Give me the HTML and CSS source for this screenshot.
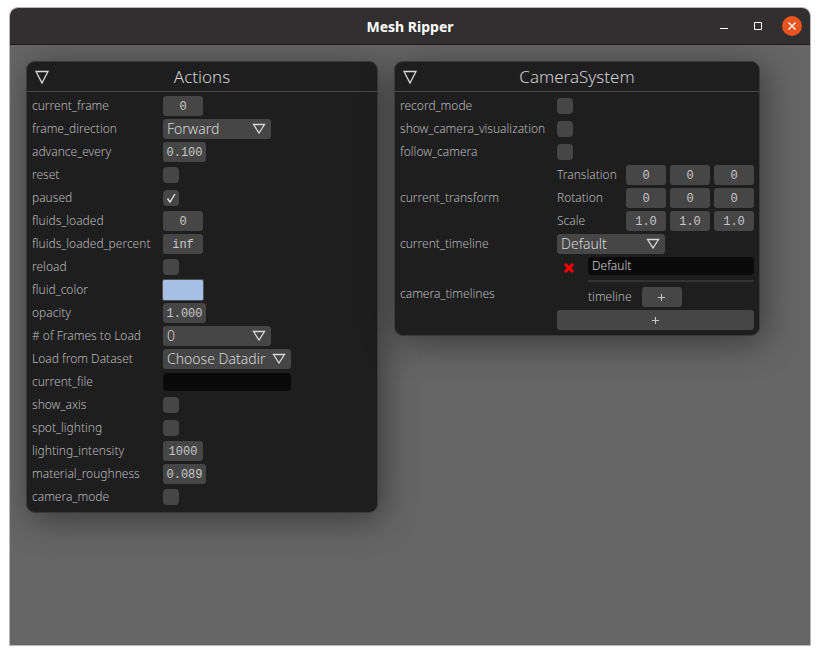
FILE: index.html
```html
<!DOCTYPE html>
<html lang="en">
<head>
<meta charset="utf-8">
<title>Mesh Ripper</title>
<link rel="stylesheet" href="styles.css">
</head>
<body>
<svg class="symbols">
  <symbol id="triangle" viewBox="0 0 14 12"><path d="M1.5 1.5h11L7 10z"/></symbol>
  <symbol id="check" viewBox="0 0 16 16"><path d="M4.5 8.5L7 12l5-8"/></symbol>
</svg>
<div class="window">
  <header class="titlebar">
    <h1 class="title">Mesh Ripper</h1>
    <div class="controls">
      <button class="control" aria-label="Minimize"><svg viewBox="0 0 18 18"><path d="M5 11.5h8"/></svg></button>
      <button class="control" aria-label="Maximize"><svg viewBox="0 0 18 18"><path d="M5.5 5.5h7v7h-7z"/></svg></button>
      <button class="control close" aria-label="Close"><svg viewBox="0 0 18 18"><path d="M5.5 5.5l7 7m0-7l-7 7"/></svg></button>
    </div>
  </header>
  <main class="canvas">
    <section class="panel actions">
      <header class="panel-head">
        <button class="collapse" aria-label="Collapse Actions"><svg viewBox="0 0 16 16"><path d="M2 2.5h12L8 14z"/></svg></button>
        <h2>Actions</h2>
      </header>
      <div class="fields">
        <label for="frame">current_frame</label><input class="num" id="frame" value="0">
        <label for="direction">frame_direction</label>
        <span class="combo"><select id="direction"><option>Forward</option></select><svg><use href="#triangle"/></svg></span>
        <label for="advance">advance_every</label><input class="num wide" id="advance" value="0.100">
        <label for="reset">reset</label><span class="tick"><input type="checkbox" id="reset"><svg><use href="#check"/></svg></span>
        <label for="paused">paused</label><span class="tick"><input type="checkbox" id="paused" checked><svg><use href="#check"/></svg></span>
        <label for="loaded">fluids_loaded</label><input class="num" id="loaded" value="0">
        <label for="percent">fluids_loaded_percent</label><input class="num" id="percent" value="inf">
        <label for="reload">reload</label><span class="tick"><input type="checkbox" id="reload"><svg><use href="#check"/></svg></span>
        <label for="color">fluid_color</label><input type="color" class="swatch" id="color" value="#a6c0e5">
        <label for="opacity">opacity</label><input class="num wide" id="opacity" value="1.000">
        <label for="frames"># of Frames to Load</label>
        <span class="combo"><select id="frames"><option>0</option></select><svg><use href="#triangle"/></svg></span>
        <label for="dataset">Load from Dataset</label>
        <span class="combo large"><select id="dataset"><option>Choose Datadir</option></select><svg><use href="#triangle"/></svg></span>
        <label for="file">current_file</label><input class="text file" id="file">
        <label for="axis">show_axis</label><span class="tick"><input type="checkbox" id="axis"><svg><use href="#check"/></svg></span>
        <label for="spot">spot_lighting</label><span class="tick"><input type="checkbox" id="spot"><svg><use href="#check"/></svg></span>
        <label for="intensity">lighting_intensity</label><input class="num" id="intensity" value="1000">
        <label for="rough">material_roughness</label><input class="num wide" id="rough" value="0.089">
        <label for="mode">camera_mode</label><span class="tick"><input type="checkbox" id="mode"><svg><use href="#check"/></svg></span>
      </div>
    </section>
    <section class="panel camera">
      <header class="panel-head">
        <button class="collapse" aria-label="Collapse CameraSystem"><svg viewBox="0 0 16 16"><path d="M2 2.5h12L8 14z"/></svg></button>
        <h2>CameraSystem</h2>
      </header>
      <div class="fields">
        <label for="record">record_mode</label><span class="tick"><input type="checkbox" id="record"><svg><use href="#check"/></svg></span>
        <label for="visual">show_camera_visualization</label><span class="tick"><input type="checkbox" id="visual"><svg><use href="#check"/></svg></span>
        <label for="follow">follow_camera</label><span class="tick"><input type="checkbox" id="follow"><svg><use href="#check"/></svg></span>
        <span>current_transform</span>
        <div class="transform">
          <label for="tx">Translation</label>
          <div class="vector"><input class="num" id="tx" value="0"><input class="num" aria-label="Translation y" value="0"><input class="num" aria-label="Translation z" value="0"></div>
          <label for="rx">Rotation</label>
          <div class="vector"><input class="num" id="rx" value="0"><input class="num" aria-label="Rotation y" value="0"><input class="num" aria-label="Rotation z" value="0"></div>
          <label for="sx">Scale</label>
          <div class="vector"><input class="num" id="sx" value="1.0"><input class="num" aria-label="Scale y" value="1.0"><input class="num" aria-label="Scale z" value="1.0"></div>
        </div>
        <label for="timeline">current_timeline</label>
        <span class="combo"><select id="timeline"><option>Default</option></select><svg><use href="#triangle"/></svg></span>
        <span>camera_timelines</span>
        <div class="timelines">
          <div class="entry">
            <button class="remove" aria-label="Remove timeline"><svg viewBox="0 0 12 12"><path d="M2 2l8 8m0-8l-8 8"/></svg></button>
            <div class="entry-body">
              <input class="text" aria-label="Timeline name" value="Default">
              <hr>
              <div class="add-row"><span>timeline</span><button class="add" aria-label="Add keyframe"><svg viewBox="0 0 9 9"><path d="M1 4.5h7M4.5 1v7"/></svg></button></div>
            </div>
          </div>
          <button class="add full" aria-label="Add timeline"><svg viewBox="0 0 9 9"><path d="M1 4.5h7M4.5 1v7"/></svg></button>
        </div>
      </div>
    </section>
  </main>
</div>
</body>
</html>
```
FILE: styles.css
```css
* { box-sizing: border-box; }

body {
  margin: 0;
  padding: 7px 9px 9px;
  min-height: 100vh;
  display: flex;
  background: #fff;
  font-family: "Noto Sans", sans-serif;
  font-size: 12px;
  font-weight: 300;
  line-height: 20px;
  color: #b8b8b8;
}

button, input, select {
  margin: 0;
  padding: 0;
  border: 0;
  border-radius: 3px;
  background: #464646;
  color: #d8d8d8;
  font: inherit;
  appearance: none;
}

h1, h2 { margin: 0; }

svg {
  fill: none;
  stroke: currentColor;
}

.symbols { display: none; }

.window {
  flex: 1;
  min-width: 0;
  display: flex;
  flex-direction: column;
  border: 1px solid #b9b7b7;
  border-radius: 9px 9px 0 0;
  overflow: hidden;
}

.titlebar {
  display: grid;
  grid-template-columns: 1fr auto 1fr;
  align-items: center;
  height: 37px;
  background: #322f30;
  border-bottom: 1px solid #1e1c1d;
  color: #fff;
}

.title {
  grid-column: 2;
  padding-top: 1px;
  font-size: 14px;
  font-weight: 700;
}

.controls {
  justify-self: end;
  display: flex;
  gap: 16px;
  padding-right: 9px;
}

.control {
  width: 18px;
  height: 18px;
  display: flex;
  border-radius: 50%;
  background: none;
  color: #fff;
}

.control svg { width: 18px; height: 18px; }

.close {
  background: #e95420;
  box-shadow: 0 0 0 1px #e95420;
  stroke-width: 1.4;
}

.canvas {
  flex: 1;
  display: flex;
  align-items: flex-start;
  gap: 16px;
  padding: 16px;
  overflow: hidden;
  background: #666;
}

.panel {
  min-width: 0;
  border: 1px solid #3a3a3a;
  border-radius: 9px;
  background: #1e1e1e;
  box-shadow: 4px 6px 36px rgba(0, 0, 0, 0.45);
}

.actions { flex: 0 1 352px; --label: 125px; }
.camera { flex: 0 1 366px; --label: 151px; }

.panel-head {
  display: grid;
  grid-template-columns: 20px 1fr 20px;
  align-items: center;
  height: 30px;
  padding: 0 5px;
  border-bottom: 1px solid #464646;
  color: #d0d0d0;
}

.panel-head h2 {
  font-size: 17px;
  font-weight: 300;
  text-align: center;
}

.collapse {
  display: flex;
  justify-content: center;
  background: none;
}

.collapse svg { width: 16px; height: 16px; stroke-width: 1.3; }

.fields {
  display: grid;
  grid-template-columns: var(--label) minmax(0, 1fr);
  grid-auto-rows: minmax(20px, auto);
  gap: 3px 6px;
  align-items: center;
  padding: 4px 5px 5px;
  white-space: nowrap;
}

.num {
  width: 40px;
  height: 20px;
  padding-top: 2px;
  color: #c8c8c8;
  font-family: "Liberation Mono", monospace;
  font-size: 12px;
  font-weight: 400;
  line-height: 18px;
  text-align: center;
}

.wide { width: 43px; }

.combo, .tick {
  display: grid;
  align-items: center;
  justify-self: start;
}

.combo > *, .tick > * { grid-area: 1 / 1; }

.combo select {
  width: 108px;
  height: 20px;
  padding: 0 4px;
  font-size: 14px;
}

.combo.large select { width: 128px; }

.combo svg {
  width: 14px;
  height: 12px;
  margin-right: 5px;
  justify-self: end;
  color: #d8d8d8;
  stroke-width: 1.3;
  pointer-events: none;
}

.tick input {
  width: 16px;
  height: 16px;
  border-radius: 4px;
}

.tick svg {
  width: 16px;
  height: 16px;
  color: #e8e8e8;
  stroke-width: 1.3;
  visibility: hidden;
  pointer-events: none;
}

.tick input:checked + svg { visibility: visible; }

.swatch {
  width: 40px;
  height: 20px;
  border-radius: 1px;
  box-shadow: 0 0 0 1px #505050;
}

.swatch::-webkit-color-swatch-wrapper { padding: 0; }
.swatch::-webkit-color-swatch { border: 0; border-radius: 1px; }

.text {
  width: 100%;
  height: 18px;
  padding: 0 4px;
  border-radius: 4px;
  background: #0a0a0a;
  line-height: 18px;
}

.file { width: 128px; }

.transform {
  display: grid;
  grid-template-columns: 1fr auto;
  gap: 3px 6px;
}

.vector { display: flex; gap: 4px; }

.timelines { display: grid; gap: 3px; }

.entry {
  display: grid;
  grid-template-columns: 23px 1fr;
  gap: 8px;
}

.remove {
  align-self: start;
  display: flex;
  justify-content: center;
  padding-top: 5px;
  background: none;
  color: #f00;
}

.remove svg { width: 12px; height: 12px; stroke-width: 3; }

.entry-body { display: grid; }

hr {
  width: 100%;
  height: 2px;
  margin: 5px 0;
  border: 0;
  background: #333;
}

.add-row { display: flex; gap: 10px; }

.add {
  width: 40px;
  height: 20px;
  display: flex;
  align-items: center;
  justify-content: center;
  color: #c8c8c8;
}

.add svg { width: 9px; height: 9px; }

.full { width: 100%; }
```
